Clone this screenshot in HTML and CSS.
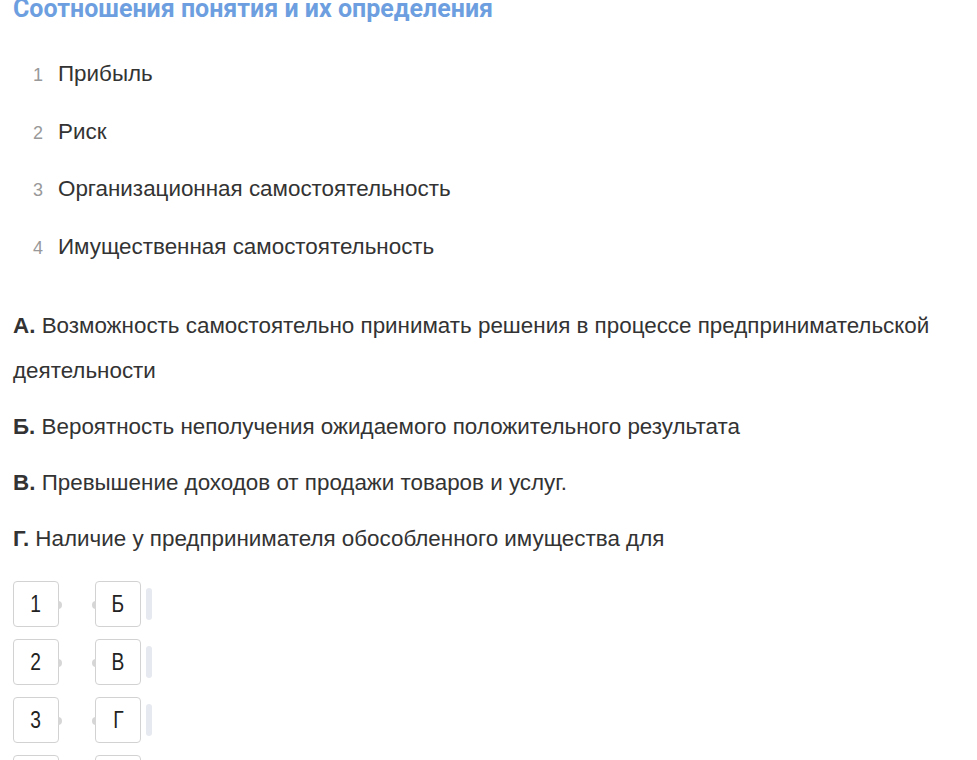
FILE: index.html
```html
<!DOCTYPE html>
<html lang="ru">
<head>
<meta charset="utf-8">
<link rel="stylesheet" href="styles.css">
</head>
<body>
<main class="page">
  <h2 class="title">Соотношения понятия и их определения</h2>
  <ol class="terms">
    <li><span class="num">1</span><span class="term">Прибыль</span></li>
    <li><span class="num">2</span><span class="term">Риск</span></li>
    <li><span class="num">3</span><span class="term">Организационная самостоятельность</span></li>
    <li><span class="num">4</span><span class="term">Имущественная самостоятельность</span></li>
  </ol>
  <div class="defs">
    <p><b>А.</b> Возможность самостоятельно принимать решения в процессе предпринимательской деятельности</p>
    <p><b>Б.</b> Вероятность неполучения ожидаемого положительного результата</p>
    <p><b>В.</b> Превышение доходов от продажи товаров и услуг.</p>
    <p><b>Г.</b> Наличие у предпринимателя обособленного имущества для</p>
  </div>
  <div class="pairs">
    <div class="pair"><div class="box left"><span>1</span></div><div class="box right"><span>Б</span></div><div class="handle"></div></div>
    <div class="pair"><div class="box left"><span>2</span></div><div class="box right"><span>В</span></div><div class="handle"></div></div>
    <div class="pair"><div class="box left"><span>3</span></div><div class="box right"><span>Г</span></div><div class="handle"></div></div>
    <div class="pair"><div class="box left"><span>4</span></div><div class="box right"><span>А</span></div><div class="handle"></div></div>
  </div>
</main>
</body>
</html>
```
FILE: styles.css
```css
html, body {
  margin: 0;
  padding: 0;
  background: #fff;
}
body {
  font-family: "Liberation Sans", Arial, sans-serif;
  color: #333;
  overflow: hidden;
}
.page {
  padding: 0 13px;
  margin-top: -6px;
  width: 940px;
}
.title {
  font-family: Roboto, "Liberation Sans", sans-serif;
  font-weight: 700;
  font-size: 25px;
  line-height: 30px;
  color: #6d9fe0;
  margin: 0 0 34px;
}
.terms {
  list-style: none;
  margin: 0;
  padding: 0 0 0 20px;
}
.terms li {
  display: flex;
  align-items: baseline;
  height: 57.5px;
  line-height: 32px;
  font-size: 22.4px;
}
.num {
  width: 25px;
  font-size: 18px;
  color: #999;
}
.term {
  color: #333;
}
.defs {
  margin-top: 15px;
}
.defs p {
  margin: 0 0 11px;
  font-size: 22.4px;
  line-height: 45px;
  color: #333;
}
.defs b {
  font-weight: 700;
}
.pairs {
  margin-top: 20px;
  display: flex;
  flex-direction: column;
  gap: 12px;
}
.pair {
  display: flex;
  align-items: center;
  height: 46px;
}
.box {
  position: relative;
  box-sizing: border-box;
  width: 46px;
  height: 46px;
  border: 1px solid #d2d2d2;
  border-radius: 4px;
  display: flex;
  align-items: center;
  justify-content: center;
  font-family: "Liberation Sans", sans-serif;
  font-size: 24px;
  color: #222;
  background: #fff;
}
.box span {
  display: inline-block;
  transform: scaleX(0.8);
}
.box.left::after,
.box.right::before {
  content: "";
  position: absolute;
  top: 19px;
  width: 4px;
  height: 8px;
  background: #d6d6d6;
}
.box.left::after {
  right: -4px;
  border-radius: 0 4px 4px 0;
}
.box.right::before {
  left: -4px;
  border-radius: 4px 0 0 4px;
}
.box.right {
  margin-left: 36px;
}
.handle {
  margin-left: 5px;
  width: 6px;
  height: 32px;
  border-radius: 3px;
  background: #e6e9ef;
}
```
